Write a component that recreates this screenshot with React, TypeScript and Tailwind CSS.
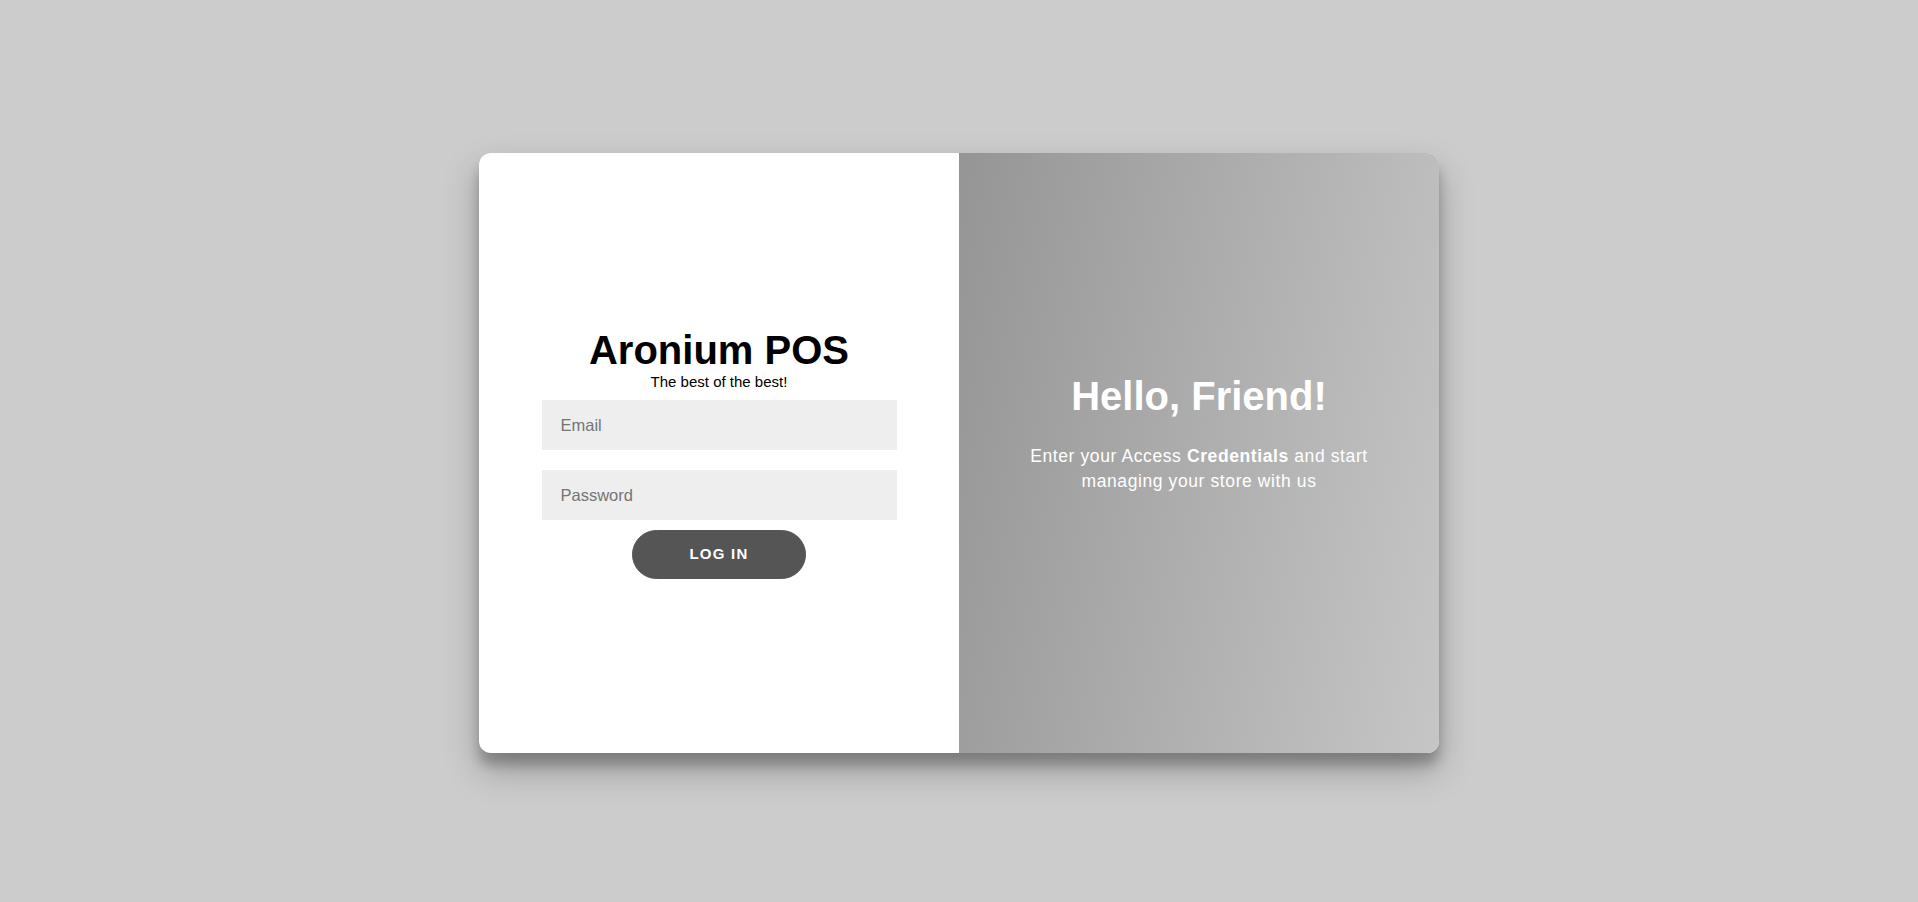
import React from "react";

export default function App() {
  return (
    <div className="flex h-[906px] w-full items-center justify-center bg-[#cccccc] font-['Liberation_Sans',Arial,sans-serif]">
      <div className="flex h-[600px] w-[960px] overflow-hidden rounded-[12px] bg-white shadow-[0_17px_35px_rgba(0,0,0,0.25),0_12px_12px_rgba(0,0,0,0.22)]">
        <div className="flex w-[480px] flex-col items-center justify-center px-[62.5px] text-center">
          <h1 className="m-0 text-[40px] font-bold leading-[46px] text-black">Aronium POS</h1>
          <span className="text-[15px] leading-[17px] text-black">The best of the best!</span>
          <input
            type="email"
            placeholder="Email"
            className="mt-[10px] mb-[10px] h-[50px] w-full border-0 bg-[#eeeeee] px-[19px] text-[16.5px] text-black outline-none placeholder:text-[#757575]"
          />
          <input
            type="password"
            placeholder="Password"
            className="mt-[10px] mb-[10px] h-[50px] w-full border-0 bg-[#eeeeee] px-[19px] text-[16.5px] text-black outline-none placeholder:text-[#757575]"
          />
          <button className="h-[49px] w-[174px] rounded-[25px] border border-[#555555] bg-[#555555] text-[15px] font-bold uppercase tracking-[1.25px] text-white">
            Log In
          </button>
        </div>
        <div className="flex w-[480px] flex-col items-center justify-center bg-[linear-gradient(100deg,#959595_0%,#b0b0b0_55%,#c6c6c6_100%)] px-[50px] text-center text-white">
          <h1 className="m-0 text-[40px] font-bold leading-[46px]">Hello, Friend!</h1>
          <p className="mt-[25px] mb-[40px] text-[17.5px] leading-[25px] tracking-[0.6px]">
            Enter your Access <b>Credentials</b> and start managing your store with us
          </p>
        </div>
      </div>
    </div>
  );
}
